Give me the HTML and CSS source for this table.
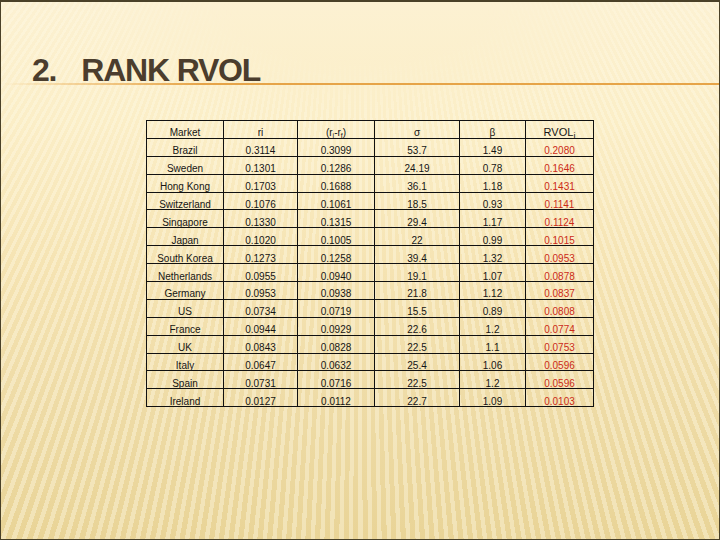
FILE: index.html
```html
<!DOCTYPE html>
<html>
<head>
<meta charset="utf-8">
<link rel="stylesheet" href="styles.css">
</head>
<body>
<div class="slide">
  <div class="stripes"></div>
  <header class="head">
    <h1 class="title"><span class="num">2.</span><span>RANK RVOL</span></h1>
    <div class="rule"></div>
  </header>
  <table class="data">
    <colgroup>
      <col class="c1"><col class="c2"><col class="c3"><col class="c4"><col class="c5"><col class="c6">
    </colgroup>
    <tr class="hdr"><td>Market</td><td>ri</td><td>(r<sub>i</sub>-r<sub>f</sub>)</td><td>σ</td><td>β</td><td class="rv">RVOL<sub>i</sub></td></tr>
    <tr><td>Brazil</td><td>0.3114</td><td>0.3099</td><td>53.7</td><td>1.49</td><td class="red">0.2080</td></tr>
    <tr><td>Sweden</td><td>0.1301</td><td>0.1286</td><td>24.19</td><td>0.78</td><td class="red">0.1646</td></tr>
    <tr><td>Hong Kong</td><td>0.1703</td><td>0.1688</td><td>36.1</td><td>1.18</td><td class="red">0.1431</td></tr>
    <tr><td>Switzerland</td><td>0.1076</td><td>0.1061</td><td>18.5</td><td>0.93</td><td class="red">0.1141</td></tr>
    <tr><td>Singapore</td><td>0.1330</td><td>0.1315</td><td>29.4</td><td>1.17</td><td class="red">0.1124</td></tr>
    <tr><td>Japan</td><td>0.1020</td><td>0.1005</td><td>22</td><td>0.99</td><td class="red">0.1015</td></tr>
    <tr><td>South Korea</td><td>0.1273</td><td>0.1258</td><td>39.4</td><td>1.32</td><td class="red">0.0953</td></tr>
    <tr><td>Netherlands</td><td>0.0955</td><td>0.0940</td><td>19.1</td><td>1.07</td><td class="red">0.0878</td></tr>
    <tr><td>Germany</td><td>0.0953</td><td>0.0938</td><td>21.8</td><td>1.12</td><td class="red">0.0837</td></tr>
    <tr><td>US</td><td>0.0734</td><td>0.0719</td><td>15.5</td><td>0.89</td><td class="red">0.0808</td></tr>
    <tr><td>France</td><td>0.0944</td><td>0.0929</td><td>22.6</td><td>1.2</td><td class="red">0.0774</td></tr>
    <tr><td>UK</td><td>0.0843</td><td>0.0828</td><td>22.5</td><td>1.1</td><td class="red">0.0753</td></tr>
    <tr><td>Italy</td><td>0.0647</td><td>0.0632</td><td>25.4</td><td>1.06</td><td class="red">0.0596</td></tr>
    <tr><td>Spain</td><td>0.0731</td><td>0.0716</td><td>22.5</td><td>1.2</td><td class="red">0.0596</td></tr>
    <tr><td>Ireland</td><td>0.0127</td><td>0.0112</td><td>22.7</td><td>1.09</td><td class="red">0.0103</td></tr>
  </table>
</div>
</body>
</html>
```
FILE: styles.css
```css
html, body {
  margin: 0;
  padding: 0;
}
body {
  width: 720px;
  height: 540px;
  overflow: hidden;
  font-family: "Liberation Sans", Arial, sans-serif;
}
.slide {
  position: relative;
  width: 720px;
  height: 540px;
  box-sizing: border-box;
  border: 1px solid #4a4128;
  border-top-width: 2px;
  background: linear-gradient(180deg, #fcf1d2 0%, #fbeec7 22%, #f5e3b2 50%, #eedba6 75%, #e9d497 100%);
  overflow: hidden;
}
.stripes {
  position: absolute;
  inset: 0;
  background: repeating-conic-gradient(from 0deg at 50% -85%, rgba(255, 250, 230, 0.4) 0deg 0.25deg, rgba(255, 255, 255, 0) 0.25deg 0.55deg);
  -webkit-mask-image: radial-gradient(ellipse 300px 110px at 50% 10px, transparent 40%, #000 100%);
  mask-image: radial-gradient(ellipse 300px 110px at 50% 10px, transparent 40%, #000 100%);
  pointer-events: none;
}
.head {
  position: relative;
  padding-top: 55px;
}
.title {
  margin: 0;
  padding-left: 31px;
  font-size: 32px;
  line-height: 26px;
  font-weight: bold;
  letter-spacing: -1.2px;
  color: #4b3d2d;
  display: flex;
}
.num {
  margin-right: 25px;
}
.rule {
  height: 2px;
  background: linear-gradient(90deg, rgba(232, 165, 70, 0) 0px, rgba(232, 165, 70, 0.35) 60px, #e6a448 200px, #e6a448 100%);
}
.data {
  position: relative;
  margin-top: 35px;
  margin-left: 145px;
  border-collapse: collapse;
  table-layout: fixed;
  width: 448px;
  font-size: 10px;
  color: #151515;
}
.c1 { width: 77px; }
.c2 { width: 74px; }
.c3 { width: 77px; }
.c4 { width: 85px; }
.c5 { width: 66px; }
.c6 { width: 68px; }
.data td {
  border: 1px solid #111;
  padding: 7px 0 0 0;
  line-height: 9px;
  text-align: center;
  white-space: nowrap;
}
.data tr {
  height: 17.9px;
}
.data sub {
  font-size: 7px;
  line-height: 0;
  vertical-align: -2px;
}
.hdr td {
  font-size: 10px;
}
.hdr .rv {
  font-size: 11px;
}
.hdr .rv sub {
  font-size: 9px;
  vertical-align: -3px;
}
.red {
  color: #cc2a18;
}
```
